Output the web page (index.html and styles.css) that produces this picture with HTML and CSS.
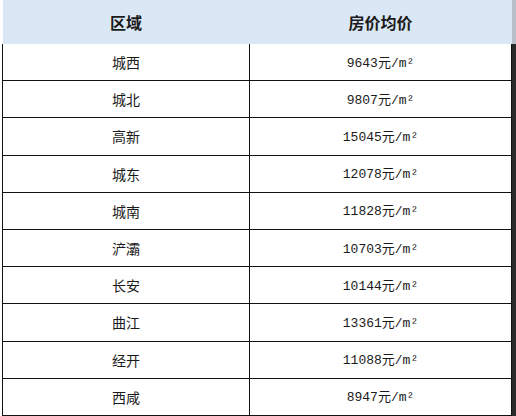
FILE: index.html
```html
<!DOCTYPE html>
<html lang="zh">
<head>
<meta charset="utf-8">
<link rel="stylesheet" href="styles.css">
</head>
<body>
<div class="page">
  <table class="price-table">
    <colgroup><col class="c1"><col class="c2"></colgroup>
    <thead>
      <tr><th>区域</th><th>房价均价</th></tr>
    </thead>
    <tbody>
      <tr><td>城西</td><td class="num">9643<span class="cjk">元</span>/m²</td></tr>
      <tr><td>城北</td><td class="num">9807<span class="cjk">元</span>/m²</td></tr>
      <tr><td>高新</td><td class="num">15045<span class="cjk">元</span>/m²</td></tr>
      <tr><td>城东</td><td class="num">12078<span class="cjk">元</span>/m²</td></tr>
      <tr><td>城南</td><td class="num">11828<span class="cjk">元</span>/m²</td></tr>
      <tr><td>浐灞</td><td class="num">10703<span class="cjk">元</span>/m²</td></tr>
      <tr><td>长安</td><td class="num">10144<span class="cjk">元</span>/m²</td></tr>
      <tr><td>曲江</td><td class="num">13361<span class="cjk">元</span>/m²</td></tr>
      <tr><td>经开</td><td class="num">11088<span class="cjk">元</span>/m²</td></tr>
      <tr><td>西咸</td><td class="num">8947<span class="cjk">元</span>/m²</td></tr>
    </tbody>
  </table>
  <div class="edge"><div class="edge-top"></div></div>
</div>
</body>
</html>
```
FILE: styles.css
```css
html, body {
  margin: 0;
  padding: 0;
  background: #ffffff;
}
.page {
  display: flex;
  width: 516px;
  height: 416px;
  overflow: hidden;
}
.price-table {
  margin-left: 2px;
  border-collapse: collapse;
  table-layout: fixed;
  width: 509px;
  flex: none;
  font-family: "Noto Sans CJK SC", "Noto Sans", sans-serif;
  color: #1a1a1a;
}
.c1 { width: 247px; }
.c2 { width: 262px; }
.price-table thead th {
  height: 44px;
  padding: 0;
  background: #dae7f4;
  font-size: 16px;
  font-weight: bold;
  text-align: center;
  vertical-align: middle;
  border: none;
  line-height: 1;
}
.price-table tbody td {
  height: 36px;
  padding: 0;
  border: 1px solid #111;
  border-top: none;
  font-size: 14px;
  text-align: center;
  vertical-align: middle;
  line-height: 1;
}
.price-table tbody tr:first-child td {
  border-top: none;
}
.price-table .num {
  font-family: "Liberation Mono", "DejaVu Sans Mono", monospace;
  font-size: 13px;
}
.price-table .cjk {
  font-family: "Noto Sans CJK SC", sans-serif;
  font-size: 13px;
}
.edge {
  margin-left: auto;
  width: 4px;
  height: 416px;
  background: #2a2a2a;
  display: flex;
  flex-direction: column;
}
.edge-top {
  height: 44px;
  background: #b7c0c9;
}
```
